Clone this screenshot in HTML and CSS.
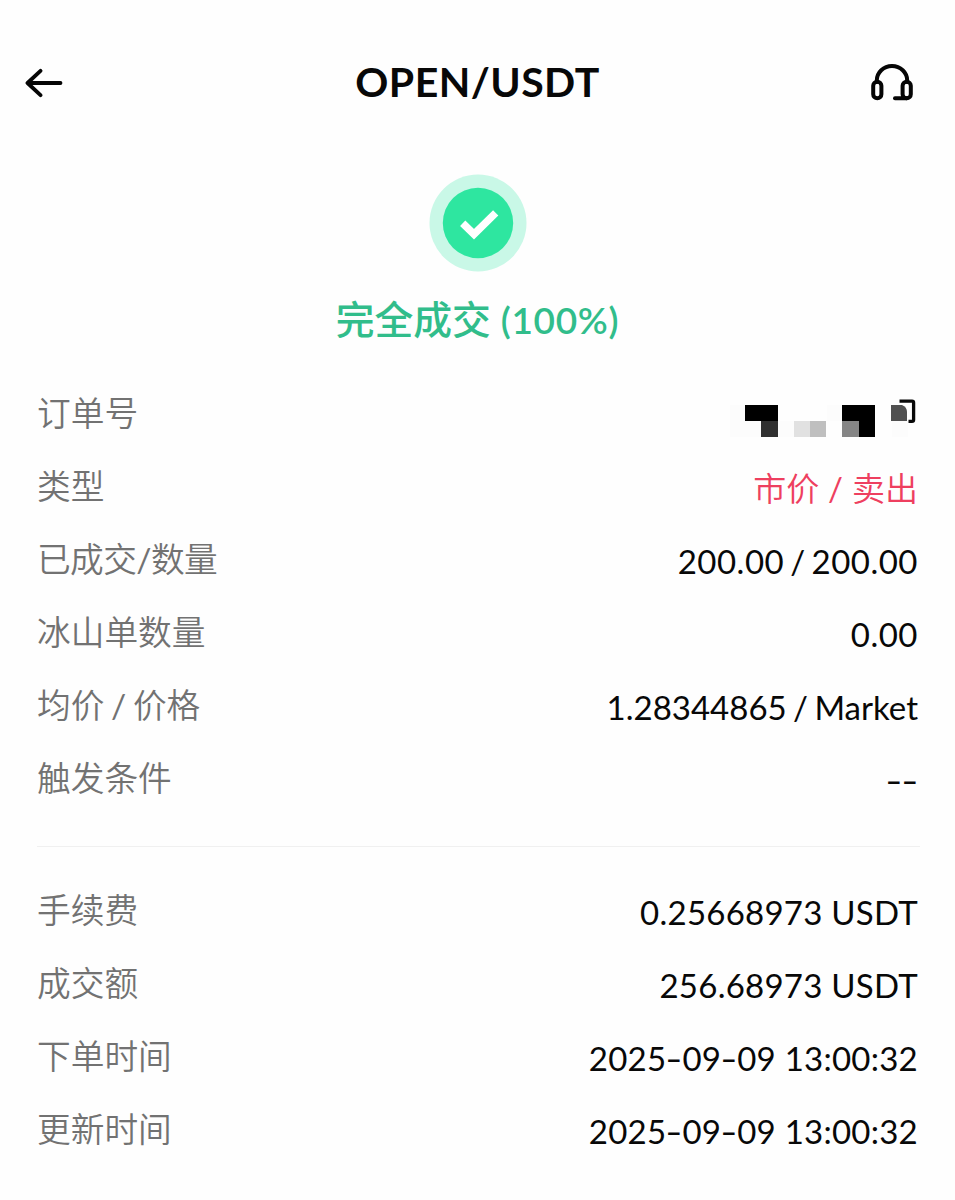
FILE: index.html
```html
<!DOCTYPE html>
<html lang="zh-CN">
<head>
<meta charset="utf-8">
<title>OPEN/USDT</title>
<link rel="stylesheet" href="styles.css">
</head>
<body>
<header class="topbar">
  <svg class="back" width="38" height="30" viewBox="0 0 38 30"><path d="M15.5 2.8 2.5 15 15.5 27.2M3 15H35.5"/></svg>
  <h1 class="pair">OPEN/USDT</h1>
  <svg class="support" width="42" height="38" viewBox="0 0 42 38"><path d="M5.8 18V16.5a15 14.3 0 0 1 30.4 0V18"/><rect x="2.2" y="17.7" width="8.2" height="16.6" rx="4.1"/><rect x="31.6" y="17.7" width="8.2" height="16.6" rx="4.1"/><path d="M35.7 34.3H24"/></svg>
</header>
<section class="status">
  <svg class="badge" width="98" height="98" viewBox="0 0 98 98"><circle class="halo" cx="49" cy="49" r="48.5"/><circle class="disc" cx="49" cy="49" r="35.2"/><path class="tick" d="M33.7 49.2 45 60.2 66.7 38.9"/></svg>
  <p class="status-text">完全成交 <span class="percent">(100%)</span></p>
</section>
<main class="details">
  <dl class="group">
    <div class="row"><dt>订单号</dt><dd class="order">
      <svg width="188" height="40" viewBox="0 0 188 40" shape-rendering="crispEdges">
        <path fill="#fcfcfc" d="M0 6h16v32H0zM16 22h16v16H16zM48 22h16v16H48zM97 6h16v16H97zM162 22h16v16h-16z"/>
        <path fill="#000" d="M15 6h33v16H15zM112 6h33v16h-33zM129 22h16v16h-16z"/>
        <path fill="#303030" d="M31 22h17v16H31z"/><path fill="#e1e1e1" d="M64 22h16v16H64z"/><path fill="#bfbfbf" d="M80 22h16v16H80z"/><path fill="#858585" d="M112 22h17v16h-17z"/>
        <path fill="#505050" shape-rendering="auto" d="M161 6h11q5 2 5 7v9h-16z"/>
        <path class="copy" shape-rendering="auto" d="M169.5 2.2h12.5q1.6 0 1.6 1.6v17q0 1.6-1.6 1.6h-3.5"/>
      </svg></dd></div>
    <div class="row"><dt>类型</dt><dd class="sell">市价 <span class="slash">/</span> 卖出</dd></div>
    <div class="row"><dt class="tight">已成交<span class="slash">/</span>数量</dt><dd class="quantity">200.00 / 200.00</dd></div>
    <div class="row"><dt>冰山单数量</dt><dd class="quantity">0.00</dd></div>
    <div class="row"><dt class="paired">均价 <span class="slash">/</span> 价格</dt><dd class="price">1.28344865 / Market</dd></div>
    <div class="row"><dt>触发条件</dt><dd><span class="dash">-</span><span class="dash">-</span></dd></div>
  </dl>
  <dl class="group">
    <div class="row"><dt>手续费</dt><dd>0.25668973 USDT</dd></div>
    <div class="row"><dt>成交额</dt><dd>256.68973 USDT</dd></div>
    <div class="row"><dt>下单时间</dt><dd>2025<span class="dash">-</span>09<span class="dash">-</span>09 13:00:32</dd></div>
    <div class="row"><dt>更新时间</dt><dd>2025<span class="dash">-</span>09<span class="dash">-</span>09 13:00:32</dd></div>
  </dl>
</main>
</body>
</html>
```
FILE: styles.css
```css
* { box-sizing: border-box; margin: 0; padding: 0; }
body { background: #fefefe; color: #080808; font-family: Lato, "Noto Sans CJK SC", sans-serif; }
svg { display: block; fill: none; }
.topbar { display: grid; grid-template-columns: 42px 1fr 42px; align-items: center; height: 164px; padding: 0 42px 0 25px; }
.back, .support { stroke: #050505; stroke-linecap: round; stroke-linejoin: round; stroke-width: 3.8; margin-top: 2px; }
.support { stroke-width: 4; overflow: visible; }
.pair { text-align: center; font-size: 41px; line-height: 50px; font-weight: 700; letter-spacing: .45px; padding-left: 17px; }
.status { display: flex; flex-direction: column; align-items: center; padding-top: 10px; }
.halo { fill: #c9f8e7; }
.disc { fill: #2ee6a0; }
.tick { stroke: #fff; stroke-width: 7.5; }
.status-text { margin-top: 18px; height: 58px; line-height: 58px; font-size: 38.8px; font-weight: 500; color: #31bd8b; white-space: nowrap; }
.percent { font-size: 37px; font-weight: 600; letter-spacing: .7px; }
.details { padding: 30px 35px 0 37px; }
.group + .group { border-top: 1px solid #f0f0f0; margin-top: 30px; padding-top: 28px; }
.row { display: flex; justify-content: space-between; align-items: center; height: 73px; padding-right: 2px; white-space: nowrap; }
dt { font-size: 33.7px; line-height: 50px; color: #727272; font-weight: 350; padding-bottom: 3px; }
dd { font-size: 33px; line-height: 50px; letter-spacing: .25px; }
.tight { letter-spacing: -.6px; }
.paired { word-spacing: -2.5px; }
.order { padding-top: 8px; }
.sell { color: #ee3f5f; font-weight: 350; letter-spacing: 0; }
.slash { font-weight: 400; }
.quantity { letter-spacing: .5px; word-spacing: -3px; }
.price { letter-spacing: 0; word-spacing: -2px; }
.dash { display: inline-block; width: 16px; text-align: center; transform: scaleX(1.4); }
.copy { stroke: #080808; stroke-width: 3.3; }
```
